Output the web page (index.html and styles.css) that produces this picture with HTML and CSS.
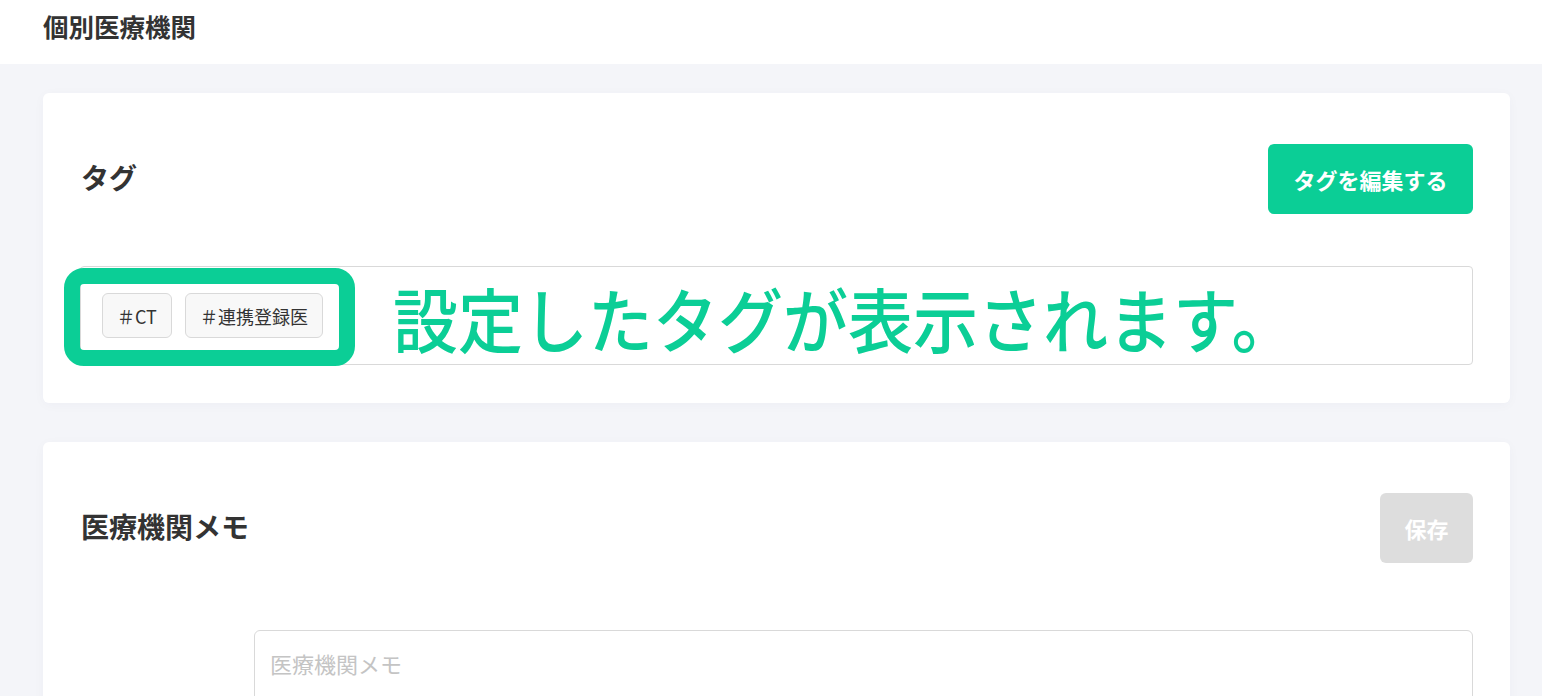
FILE: index.html
```html
<!DOCTYPE html>
<html lang="ja">
<head>
    <meta charset="UTF-8">
    <meta name="viewport" content="width=device-width, initial-scale=1.0">
    <title>個別医療機関</title>
    <link rel="stylesheet" href="styles.css">
</head>
<body>
<header class="page-header">
    <h1 class="page-title">個別医療機関</h1>
</header>

<main class="content">
    <!-- Tags -->
    <section class="card">
        <div class="card-head">
            <h2 class="card-title">タグ</h2>
            <button class="btn btn-primary">タグを編集する</button>
        </div>
        <div class="tag-box">
            <span class="chip">＃CT</span>
            <span class="chip">＃連携登録医</span>
            <div class="note-frame"></div>
            <div class="note-text">設定したタグが表示されます。</div>
        </div>
    </section>

    <!-- Memo -->
    <section class="card">
        <div class="card-head">
            <h2 class="card-title">医療機関メモ</h2>
            <button class="btn btn-disabled" disabled>保存</button>
        </div>
        <div class="memo-row">
            <textarea class="memo-input" placeholder="医療機関メモ"></textarea>
        </div>
    </section>
</main>
</body>
</html>
```

FILE: styles.css
```css
* {
    margin: 0;
    padding: 0;
    box-sizing: border-box;
}

body {
    font-family: "Noto Sans CJK JP", "Noto Sans", sans-serif;
    background: #f4f5f9;
    color: #333;
    height: 696px;
    overflow: hidden;
}

.page-header {
    background: white;
    height: 64px;
    padding: 9px 43px 0;
}

.page-title {
    font-size: 25.5px;
    font-weight: 700;
    line-height: 34px;
    color: #333;
}

.content {
    padding: 29px 32px 0 43px;
    display: flex;
    flex-direction: column;
    gap: 39px;
}

.card {
    background: white;
    border-radius: 6px;
    padding: 51px 37px 38px;
    box-shadow: 0 2px 12px rgba(30, 40, 90, 0.03);
}

.card-head {
    display: flex;
    align-items: center;
    justify-content: space-between;
    padding-left: 1px;
}

.card-title {
    font-size: 28px;
    font-weight: 700;
    line-height: 40px;
    margin-top: -5px;
}

.btn {
    height: 70px;
    border: none;
    border-radius: 6px;
    font-family: inherit;
    font-size: 22px;
    font-weight: 700;
    color: white;
    cursor: pointer;
}

.btn-primary {
    width: 205px;
    background: #0bce96;
}

.btn-disabled {
    width: 93px;
    background: #dddddd;
    cursor: not-allowed;
}

.tag-box {
    position: relative;
    margin-top: 52px;
    height: 99px;
    border: 1px solid #d9d9d9;
    border-radius: 4px;
    padding: 26px 21px;
    display: flex;
    gap: 13px;
}

.chip {
    height: 45px;
    padding: 0 14px;
    display: flex;
    align-items: center;
    background: #f8f8f8;
    border: 1px solid #d9d9d9;
    border-radius: 6px;
    font-size: 18px;
    color: #333;
}

/* annotation over the tag box */
.note-frame {
    position: absolute;
    left: -17px;
    top: 1px;
    width: 291px;
    height: 98px;
    border: 16px solid #0bce96;
    border-radius: 20px;
}

.note-text {
    position: absolute;
    left: 312px;
    top: 6px;
    font-size: 65px;
    font-weight: 500;
    line-height: 90px;
    color: #0bce96;
    white-space: nowrap;
    transform: scaleY(1.08);
}

.memo-row {
    margin-top: 67px;
    padding-left: 174px;
}

.memo-input {
    display: block;
    width: 100%;
    height: 120px;
    border: 1px solid #d9d9d9;
    border-radius: 6px;
    padding: 16px 15px;
    font-family: inherit;
    font-size: 22px;
    resize: none;
    outline: none;
}

.memo-input::placeholder {
    color: #c4c4c4;
}
```
